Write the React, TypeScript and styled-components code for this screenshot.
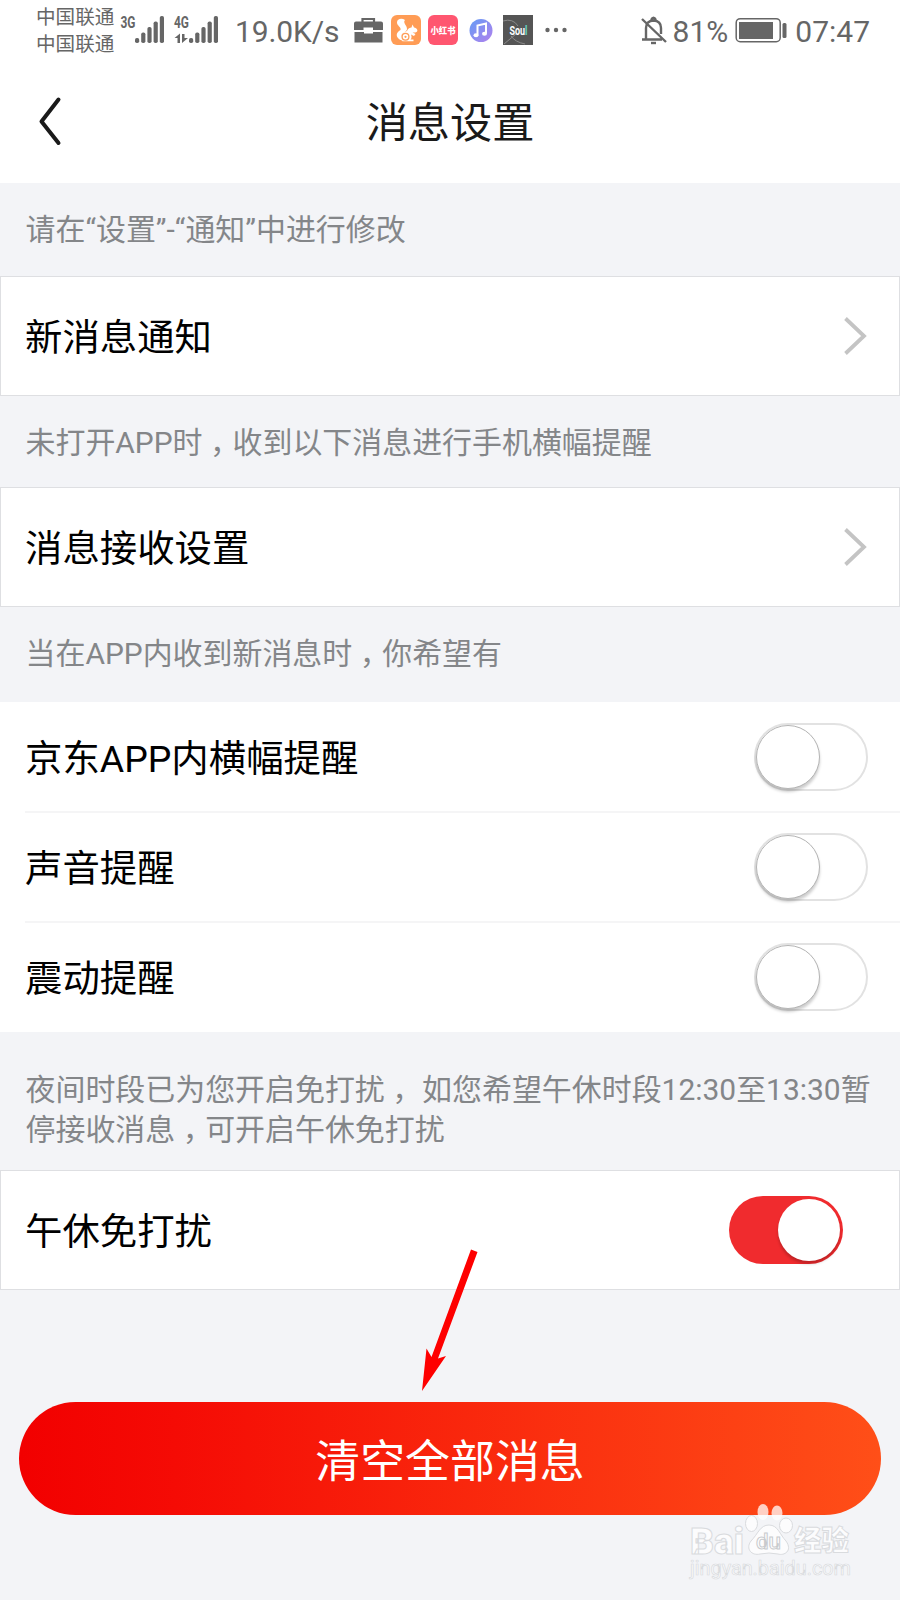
import React from 'react';
import styled, { createGlobalStyle } from 'styled-components';

const GlobalStyle = createGlobalStyle`
  * { box-sizing: border-box; }
  body {
    margin: 0;
    background: #f3f4f7;
    font-family: Roboto, "Noto Sans CJK SC", sans-serif;
  }
`;

const Screen = styled.div`
  position: relative;
  width: 900px;
  height: 1600px;
  overflow: hidden;
  background: #f3f4f7;
`;

const StatusBar = styled.div`
  display: flex;
  align-items: center;
  height: 60px;
  padding: 0 30px 0 36px;
  background: #fff;
  color: #666;
`;

const Carriers = styled.div`
  display: flex;
  flex-direction: column;
  width: 80px;
  padding-top: 2px;
  font-size: 19.6px;
  line-height: 27px;
  white-space: nowrap;
`;

const Signals = styled.svg`
  margin: 0 0 0 4px;
  flex: none;
`;

const StatusText = styled.span<{ $left: number; $spacing?: number }>`
  margin-left: ${(p) => p.$left}px;
  padding-top: 3px;
  font-size: 30px;
  letter-spacing: ${(p) => p.$spacing ?? 0}px;
  line-height: 60px;
  white-space: nowrap;
`;

const StatusIcons = styled.svg`
  flex: none;
  margin-left: 14px;
`;

const StatusRight = styled.div`
  display: flex;
  align-items: center;
  margin-left: auto;
`;

const BatteryIcon = styled.svg`
  flex: none;
  margin-left: 7px;
`;

const Header = styled.header`
  display: grid;
  grid-template-columns: 100px 1fr 100px;
  align-items: center;
  height: 123px;
  background: #fff;
`;

const BackButton = styled.button`
  display: flex;
  padding: 0 0 2px 36px;
  border: 0;
  background: none;
`;

const Title = styled.h1`
  margin: 0;
  padding-top: 4px;
  color: #1a1a1a;
  font-size: 42.2px;
  font-weight: 400;
  line-height: 60px;
  text-align: center;
`;

const Note = styled.p<{ $height: number; $top: number }>`
  height: ${(p) => p.$height}px;
  margin: 0;
  padding: ${(p) => p.$top}px 0 0 25.5px;
  color: #848689;
  font-size: 29.95px;
  font-weight: 400;
  line-height: 40px;
  white-space: nowrap;
`;

const Comma = styled.span`
  display: inline-block;
  width: 1em;
  font-feature-settings: "halt";
  text-align: center;
`;

const Card = styled.section`
  display: flex;
  align-items: center;
  justify-content: space-between;
  height: 120px;
  padding: 0 32px 0 24px;
  border: 1px solid #dedfe2;
  background: #fff;
`;

const ToggleCard = styled(Card)`
  padding-right: 56px;
`;

const Group = styled.section`
  padding-left: 25px;
  background: #fff;
`;

const Row = styled.div`
  display: flex;
  align-items: center;
  justify-content: space-between;
  height: 110px;
  padding-right: 32px;

  & + & {
    box-shadow: 0 -1px 0 #f5f5f6, inset 0 1px 0 #f5f5f6;
  }
`;

const Label = styled.span`
  padding-top: 4px;
  color: #000;
  font-size: 37.4px;
  font-weight: 400;
  line-height: 54px;
`;

const Track = styled.span<{ $on?: boolean }>`
  display: flex;
  justify-content: ${(p) => (p.$on ? 'flex-end' : 'flex-start')};
  width: 114px;
  height: 68px;
  padding: ${(p) => (p.$on ? '3px' : '0')};
  border: ${(p) => (p.$on ? '0' : '2px solid #e2e2e2')};
  border-radius: 34px;
  background: ${(p) => (p.$on ? '#f02b2e' : '#fff')};
`;

const Knob = styled.span<{ $on?: boolean }>`
  width: ${(p) => (p.$on ? 62 : 64)}px;
  height: ${(p) => (p.$on ? 62 : 64)}px;
  border: ${(p) => (p.$on ? '0' : '1.5px solid #b4b4b4')};
  border-radius: 50%;
  background: #fff;
  box-shadow: 0 3px 3px rgba(0, 0, 0, 0.2);
`;

const ChevronIcon = styled.svg`
  flex: none;
`;

const Action = styled.div`
  padding: 112px 19px 0;
`;

const ClearButton = styled.button`
  display: block;
  width: 862px;
  height: 113px;
  padding: 8px 0 0;
  border: 0;
  border-radius: 57px;
  background: linear-gradient(90deg, #f20000 0%, #f50b05 18%, #ff4f18 100%);
  color: #fff;
  font-family: inherit;
  font-size: 44.9px;
  font-weight: 400;
  line-height: 105px;
`;

const Pointer = styled.svg`
  position: absolute;
  left: 400px;
  top: 1240px;
`;

const Watermark = styled.svg`
  position: absolute;
  left: 680px;
  top: 1495px;
`;

const Switch = ({ on }: { on?: boolean }) => (
  <Track $on={on} role="switch" aria-checked={!!on}>
    <Knob $on={on} />
  </Track>
);

const Chevron = () => (
  <ChevronIcon width="23" height="38" viewBox="0 0 23 38" fill="none" stroke="#c4c4c4" strokeWidth="3.8">
    <path d="M1.500 1.500 L20 19 L1.500 36.500" />
  </ChevronIcon>
);

const barHeights = [5, 10.5, 16, 21.5, 27];

const SignalBars = ({ x }: { x: number }) => (
  <g fill="#666">
    {barHeights.map((h, i) => (
      <rect key={h} x={x + i * 6.2} y={43 - h} width="4.2" height={h} rx="1.8" />
    ))}
  </g>
);

const App = () => (
  <>
    <GlobalStyle />
    <Screen>
      <StatusBar>
        <Carriers>
          <span>中国联通</span>
          <span>中国联通</span>
        </Carriers>
        <Signals width="100" height="60" viewBox="120 0 100 60">
          <text x="120.5" y="28" fontSize="16" fontWeight="700" fill="#666" textLength="15" lengthAdjust="spacingAndGlyphs">3G</text>
          <SignalBars x={135} />
          <text x="174" y="28" fontSize="16" fontWeight="700" fill="#666" textLength="15" lengthAdjust="spacingAndGlyphs">4G</text>
          <path d="M174.500 38 L180 33.500 V43 H177.500 V38z M182 34 H184.500 V38 H188 L182 43z" fill="#666" />
          <SignalBars x={189} />
        </Signals>
        <StatusText $left={15} $spacing={-0.1}>19.0K/s</StatusText>
        <StatusIcons width="216" height="60" viewBox="354 0 216 60">
          <g fill="#666">
            <path d="M363.500 22 v-3 h11.500 v3" fill="none" stroke="#666" strokeWidth="2.200" />
            <path d="M357 21.500 h25 q2 0 2 2 v6.500 h-10 v-2.500 h-9.500 v2.500 h-9.500 v-6.500 q0-2 2-2z" />
            <path d="M355.500 32 h9.500 v1.500 h9 v-1.500 h9.500 v10.500 h-28z" />
          </g>
          <rect x="392" y="15" width="30" height="30" rx="6" fill="#ff9c55" />
          <g fill="#fff">
            <path d="M403 40.500 C395.500 38 397 32 401.500 30 C402.500 27 398 26 398 22.500 C398 18.500 403 18 406 20 C403.500 23 408 25 408 29 C408 32 403 32.500 402.500 35.500 C402.300 37.500 404 39 403 40.500z" />
            <path d="M408 31 C409 28 411 27.500 412.500 27.500 L413.500 24.500 L415 27.500 C418 28 419.500 30.500 417.500 32 C416.500 32.700 415 32.500 413.500 32.500 L416.500 34 L415 36 L412 34.500 C413 37 412.500 38.500 411.500 39.500 L414.500 39.500 V41.300 H403.500 C400 35 404 32 408 31z" />
          </g>
          <circle cx="406.500" cy="36.800" r="3.400" fill="#fff" stroke="#ff9c55" strokeWidth="1.300" />
          <circle cx="406.500" cy="36.800" r="1.100" fill="#ff9c55" />
          <rect x="429" y="15" width="30" height="30" rx="6" fill="#ff5670" />
          <text x="444" y="34" textAnchor="middle" fontSize="9" fontWeight="900" fill="#fff" textLength="25" lengthAdjust="spacingAndGlyphs">小红书</text>
          <defs>
            <linearGradient id="music" x1="0" y1="0" x2="1" y2="1">
              <stop offset="0" stopColor="#649cf5" />
              <stop offset="1" stopColor="#b181ed" />
            </linearGradient>
            <linearGradient id="soul" x1="0" y1="0" x2="1" y2="0">
              <stop offset="0.86" stopColor="#fff" />
              <stop offset="0.86" stopColor="#65d5c4" />
            </linearGradient>
          </defs>
          <circle cx="482" cy="30.500" r="11.500" fill="url(#music)" />
          <g fill="#fff">
            <path d="M478.500 35 V25.500 L487 23.500 V33.500" fill="none" stroke="#fff" strokeWidth="2" />
            <ellipse cx="477" cy="35.200" rx="2.500" ry="2" />
            <ellipse cx="485.500" cy="33.700" rx="2.500" ry="2" />
          </g>
          <rect x="504" y="15" width="30" height="30" fill="#555" />
          <path d="M504 21 Q514 18 519 26 M512 36 Q516 42 526 44 M505 44 L517 34" fill="none" stroke="#8b8b8b" />
          <text x="510.500" y="34.500" fontSize="12.500" fontWeight="700" fill="url(#soul)" textLength="18" lengthAdjust="spacingAndGlyphs">Soul</text>
          <g fill="#666">
            <circle cx="548.500" cy="30" r="2.200" />
            <circle cx="557" cy="30" r="2.200" />
            <circle cx="565.500" cy="30" r="2.200" />
          </g>
        </StatusIcons>
        <StatusRight>
          <svg width="28" height="60" viewBox="641 0 28 60" fill="none" stroke="#666" strokeWidth="2.400">
            <path d="M643 39.500 H663 M647 39 V28 Q647 21 654.500 20.500 Q662 21 662 28 V34 M652 20 Q654.500 15.500 657 20 M643 19 L667 42" />
            <path d="M652 43 h5" />
          </svg>
          <StatusText $left={5}>81%</StatusText>
          <BatteryIcon width="52" height="60" viewBox="736 0 52 60">
            <rect x="737.200" y="18.700" width="44" height="23" rx="4" fill="none" stroke="#666" strokeWidth="1.500" />
            <rect x="740" y="22" width="34" height="17" fill="#666" />
            <rect x="783.500" y="23" width="4" height="15" rx="1.500" fill="#666" />
          </BatteryIcon>
          <StatusText $left={8}>07:47</StatusText>
        </StatusRight>
      </StatusBar>
      <Header>
        <BackButton aria-label="返回">
          <svg width="28" height="52" viewBox="36 0 28 52" fill="none" stroke="#1a1a1a" strokeWidth="4" strokeLinecap="round" strokeLinejoin="round">
            <path d="M58.500 4.500 L41.500 26.500 L58.500 48" />
          </svg>
        </BackButton>
        <Title>消息设置</Title>
      </Header>
      <Note $height={93} $top={27}>请在“设置”-“通知”中进行修改</Note>
      <Card>
        <Label>新消息通知</Label>
        <Chevron />
      </Card>
      <Note $height={91} $top={27}>未打开APP时<Comma>，</Comma>收到以下消息进行手机横幅提醒</Note>
      <Card>
        <Label>消息接收设置</Label>
        <Chevron />
      </Card>
      <Note $height={95} $top={27}>当在APP内收到新消息时<Comma>，</Comma>你希望有</Note>
      <Group>
        {['京东APP内横幅提醒', '声音提醒', '震动提醒'].map((label) => (
          <Row key={label}>
            <Label>{label}</Label>
            <Switch />
          </Row>
        ))}
      </Group>
      <Note $height={138} $top={38}>
        夜间时段已为您开启免打扰<Comma>，</Comma> 如您希望午休时段12:30至13:30暂
        <br />
        停接收消息<Comma>，</Comma>可开启午休免打扰
      </Note>
      <ToggleCard>
        <Label>午休免打扰</Label>
        <Switch on />
      </ToggleCard>
      <Action>
        <ClearButton>清空全部消息</ClearButton>
      </Action>
      <Pointer width="90" height="160" viewBox="400 1240 90 160" fill="#fe0000">
        <path d="M471 1249.500 L477.500 1252 L438 1358.500 L446 1356 L422 1391 L426.500 1348.500 L431.500 1357z" />
      </Pointer>
      <Watermark width="190" height="90" viewBox="680 1495 190 90">
        <g fill="#fff" fillOpacity="0.75" stroke="#d9dbde" strokeWidth="1">
          <ellipse cx="763" cy="1512" rx="5.500" ry="8" stroke="none" />
          <ellipse cx="777" cy="1513" rx="5.500" ry="7.500" stroke="none" />
          <ellipse cx="751.500" cy="1523.500" rx="6" ry="8" />
          <ellipse cx="786" cy="1525.500" rx="6.500" ry="7.500" />
          <path d="M769 1525 C778 1525 780 1535 786 1541 C793 1551 784 1556 778 1554 Q769 1552 760 1554 C752 1556 745 1549 751 1541 C758 1534 760 1525 769 1525z" />
          <text x="690" y="1553.500" fontSize="36" fontWeight="900" textLength="54" lengthAdjust="spacingAndGlyphs">Bai</text>
          <text x="756" y="1549" fontSize="22" fontWeight="500" stroke="#c8cacd" textLength="25" lengthAdjust="spacingAndGlyphs">du</text>
          <text x="794" y="1551" fontSize="28" fontWeight="900" textLength="55" lengthAdjust="spacingAndGlyphs">经验</text>
          <text x="690" y="1575" fontSize="19.500" strokeWidth="0.700" textLength="161" lengthAdjust="spacingAndGlyphs">jingyan.baidu.com</text>
        </g>
      </Watermark>
    </Screen>
  </>
);

export default App;
